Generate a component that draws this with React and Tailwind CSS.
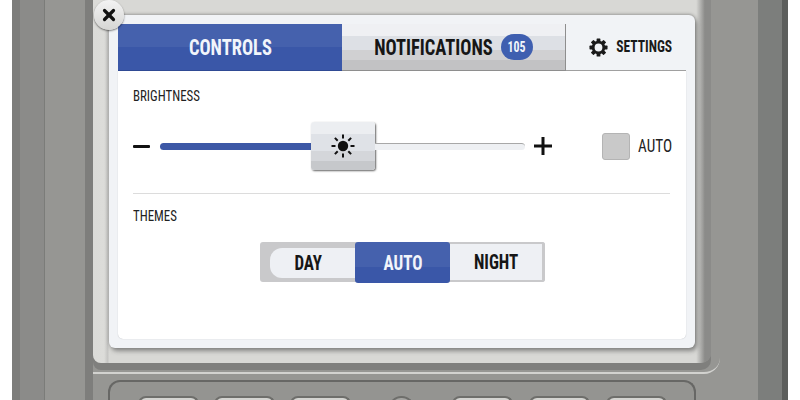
import React from "react";

const condensed = { fontFamily: '"Liberation Sans Narrow", "Roboto Condensed", "DejaVu Sans Condensed", Roboto, sans-serif' };

const GearIcon = () => (
  <svg width="19" height="19" viewBox="0 0 20 20" fill="#1a1a1a">
    {[0, 45, 90, 135, 180, 225, 270, 315].map((a) => (
      <rect key={a} x="8" y="0.5" width="4" height="4" rx="0.6" transform={`rotate(${a} 10 10)`} />
    ))}
    <circle cx="10" cy="10" r="5.6" fill="none" stroke="#1a1a1a" strokeWidth="3" />
  </svg>
);

const SunIcon = () => (
  <svg width="24" height="24" viewBox="0 0 24 24" stroke="#111" strokeWidth="2" strokeLinecap="butt">
    <circle cx="12" cy="12" r="5.2" fill="#111" stroke="none" />
    {[0, 45, 90, 135, 180, 225, 270, 315].map((a) => (
      <line key={a} x1="12" y1="0.5" x2="12" y2="4.5" transform={`rotate(${a} 12 12)`} />
    ))}
  </svg>
);

const KeyButton = () => (
  <div className="w-[61px] h-[12px] rounded-t-[8px] border-[2px] border-b-0 border-[#6e6e6b] bg-[linear-gradient(180deg,#d4d4d1_0%,#d4d4d1_35%,#a9a9a6_35%,#a9a9a6_100%)]" />
);

export default function App() {
  return (
    <div className="w-[800px] h-[400px] flex overflow-hidden bg-white" style={condensed}>
      {/* left side of the case */}
      <div className="w-[12px] bg-white" />
      <div className="w-[8px] bg-[#7d7d7b]" />
      <div className="w-[25px] bg-[#8b8b89] border-r border-[#7b7c79]" />
      <div className="w-[40px] bg-[#969693]" />
      <div className="w-[8px] bg-[#7e7e7c]" />

      {/* centre: screen bezel and keypad */}
      <div className="w-[627px] flex flex-col bg-[#969693]">
        <div className="h-[374px] shrink-0 pr-[9px] pb-[9px] rounded-br-[16px] border-b-[2px] border-[#d2d2cf] bg-[#969693]">
          <div className="relative h-[363px] rounded-bl-[8px] rounded-br-[10px] bg-[linear-gradient(90deg,#dbdbd8_0%,#dcdcd9_1.8%,#c4c4c2_2.4%,#d8d8d5_2.6%,#d8d8d5_97.6%,#8b8b89_99%,#8b8b89_100%)] shadow-[0_7px_0_#7f7f7d] pt-[15px] pl-[16px]">
            <div className="relative w-[586px] h-[333px] rounded-[6px] bg-[#f1f3f6] pt-[9px] px-[9px] pb-[9px] shadow-[2px_3px_4px_rgba(70,70,70,0.55),0_-1px_3px_rgba(90,90,90,0.45)]">
              {/* close button */}
              <button className="absolute left-[-15px] top-[-15px] w-[30px] h-[30px] rounded-full bg-[linear-gradient(180deg,#f3f3f3,#d6d6d4)] shadow-[0_1px_2px_rgba(0,0,0,0.55)] flex items-center justify-center">
                <svg width="14" height="14" viewBox="0 0 14 14" stroke="#111" strokeWidth="3.2" strokeLinecap="round">
                  <line x1="2.5" y1="2.5" x2="11.5" y2="11.5" />
                  <line x1="11.5" y1="2.5" x2="2.5" y2="11.5" />
                </svg>
              </button>

              {/* tabs */}
              <div className="flex h-[47px]">
                <div className="w-[224px] flex items-center justify-center text-[22px] font-bold text-[#f2f5fb] border-b border-[#2f4a94] bg-[linear-gradient(180deg,#4561ad_0%,#4561ad_50%,#3a57a8_50%,#3a57a8_100%)]">
                  <span className="inline-block scale-x-[.84]">CONTROLS</span>
                </div>
                <div className="w-[224px] flex items-center justify-center gap-[7px] text-[22px] font-bold text-[#161616] border-b border-r border-[#8e8e8e] bg-[linear-gradient(180deg,#eff0f3_0%,#eff0f3_26%,#dde0e5_26%,#dde0e5_56%,#d0d0d2_56%,#d0d0d2_78%,#c2c2c4_78%,#c2c2c4_100%)]">
                  <span className="inline-block scale-x-[.84] -mx-[11px]">NOTIFICATIONS</span>
                  <span className="w-[32px] h-[26px] rounded-full bg-[#3f5fb0] text-[#f2f5fb] text-[14px] flex items-center justify-center">
                    <span className="inline-block scale-x-[.85]">105</span>
                  </span>
                </div>
                <div className="flex-1 flex items-center justify-center gap-[8px] pl-[10px] text-[16.5px] font-bold text-[#1a1a1a] border-b border-[#a0a0a0]">
                  <GearIcon />
                  <span className="inline-block scale-x-[.82] -mx-[6px]">SETTINGS</span>
                </div>
              </div>

              {/* panel */}
              <div className="h-[268px] rounded-b-[5px] bg-white shadow-[0_0_1px_#a9acb2] px-[15px] pt-[18px]">
                <div className="text-[14px] leading-[14px] text-[#222]">
                  <span className="inline-block scale-x-[.92] origin-left">BRIGHTNESS</span>
                </div>

                <div className="flex items-center h-[48px] mt-[19px]">
                  <div className="w-[17px] h-[3px] shrink-0 bg-[#111] rounded-[1px]" />
                  <div className="w-[365px] shrink-0 ml-[10px] flex items-center">
                    <div className="w-[151px] h-[7px] rounded-l-full bg-[#3d58a6]" />
                    <div className="w-[64px] h-[48px] shrink-0 rounded-[3px] flex items-center justify-center bg-[linear-gradient(180deg,#eceef1_0%,#eceef1_25%,#dfe2e7_25%,#dfe2e7_60%,#d4d6da_60%,#d4d6da_82%,#c6c8cb_82%,#c6c8cb_100%)] shadow-[1px_1px_2px_rgba(50,50,50,0.75)]">
                      <SunIcon />
                    </div>
                    <div className="flex-1 h-[7px] rounded-r-full border-t border-[#a8a8a8] bg-[#eef0f3]" />
                  </div>
                  <svg className="ml-[9px] shrink-0" width="18" height="18" viewBox="0 0 18 18" fill="#111">
                    <rect x="0" y="7.5" width="18" height="3" />
                    <rect x="7.5" y="0" width="3" height="18" />
                  </svg>
                  <div className="ml-[50px] w-[28px] h-[27px] shrink-0 rounded-[3px] bg-[#c9c9c9] border border-[#b4b4b4]" />
                  <span className="ml-[8px] w-[34px] shrink-0 text-[19px] text-[#222] whitespace-nowrap">
                    <span className="inline-block scale-x-[.8] origin-left">AUTO</span>
                  </span>
                </div>

                <div className="h-px bg-[#dcdcdc] mt-[23px] mr-[1px]" />

                <div className="text-[14px] leading-[14px] text-[#222] mt-[15px]">
                  <span className="inline-block scale-x-[.92] origin-left">THEMES</span>
                </div>

                {/* theme switch */}
                <div className="flex justify-center mt-[19px] ml-[1px]">
                  <div className="flex h-[40px] rounded-[3px] bg-[#c9c9cb] text-[20px] font-bold text-[#161616]">
                    <div className="w-[95px] pl-[10px] pt-[6px] pb-[4px] flex">
                      <div className="flex-1 rounded-l-[12px] bg-[#eef0f4] flex items-center justify-center pr-[8px]">
                        <span className="inline-block scale-x-[.85]">DAY</span>
                      </div>
                    </div>
                    <div className="w-[95px] h-[41px] rounded-[3px] bg-[linear-gradient(180deg,#4561ad_0%,#4561ad_60%,#3a57a8_60%,#3a57a8_100%)] text-[#f2f5fb] flex items-center justify-center">
                      <span className="inline-block scale-x-[.85]">AUTO</span>
                    </div>
                    <div className="w-[95px] flex bg-[#eef0f4] rounded-r-[3px] border-t-[2px] border-r-[3px] border-b-[2px] border-[#c9c9cb]">
                      <div className="flex-1 flex items-center justify-center">
                        <span className="inline-block scale-x-[.85]">NIGHT</span>
                      </div>
                    </div>
                  </div>
                </div>
              </div>
            </div>
          </div>
        </div>

        {/* keypad */}
        <div className="flex-1 mt-[6px] ml-[15px] w-[588px] rounded-t-[12px] border-[2px] border-b-0 border-[#676765] bg-[#949491] pt-[14px] pl-[28px] flex">
          <div className="flex gap-[15px]">
            <KeyButton />
            <KeyButton />
            <KeyButton />
          </div>
          <div className="ml-[38px] w-[25px] h-[12px] rounded-t-full border-[2px] border-b-0 border-[#6e6e6b] bg-[#a5a5a2]" />
          <div className="flex gap-[16px] ml-[38px]">
            <KeyButton />
            <KeyButton />
            <KeyButton />
          </div>
        </div>
      </div>

      {/* right side of the case */}
      <div className="w-[38px] bg-[#969693]" />
      <div className="w-[24px] bg-[#7c7e7c]" />
      <div className="w-[6px] bg-[#5d5f5d]" />
      <div className="w-[12px] bg-white" />
    </div>
  );
}
